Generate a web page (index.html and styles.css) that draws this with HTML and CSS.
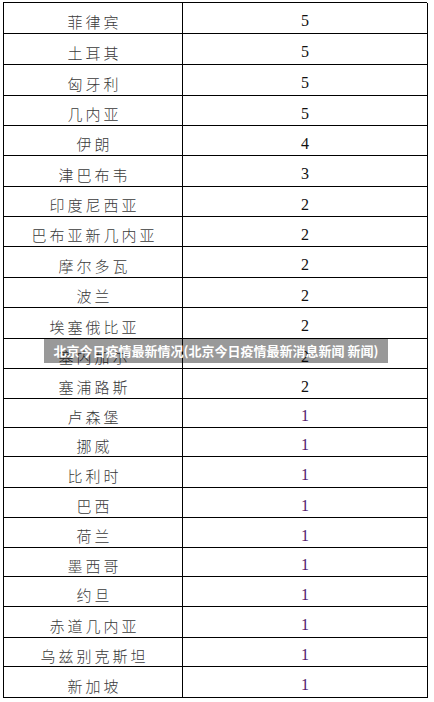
FILE: index.html
```html
<!DOCTYPE html>
<html lang="zh-CN">
<head>
<meta charset="utf-8">
<title>北京今日疫情最新情况</title>
<link rel="stylesheet" href="styles.css">
</head>
<body>
<div class="page">
  <div class="table">
    <div class="cell name">菲律宾</div><div class="cell num">5</div>
    <div class="cell name">土耳其</div><div class="cell num">5</div>
    <div class="cell name">匈牙利</div><div class="cell num">5</div>
    <div class="cell name">几内亚</div><div class="cell num">5</div>
    <div class="cell name">伊朗</div><div class="cell num">4</div>
    <div class="cell name">津巴布韦</div><div class="cell num">3</div>
    <div class="cell name">印度尼西亚</div><div class="cell num">2</div>
    <div class="cell name">巴布亚新几内亚</div><div class="cell num">2</div>
    <div class="cell name">摩尔多瓦</div><div class="cell num">2</div>
    <div class="cell name">波兰</div><div class="cell num">2</div>
    <div class="cell name">埃塞俄比亚</div><div class="cell num">2</div>
    <div class="cell name">塞内加尔</div><div class="cell num">2</div>
    <div class="cell name">塞浦路斯</div><div class="cell num">2</div>
    <div class="cell name">卢森堡</div><div class="cell num one">1</div>
    <div class="cell name">挪威</div><div class="cell num one">1</div>
    <div class="cell name">比利时</div><div class="cell num one">1</div>
    <div class="cell name">巴西</div><div class="cell num one">1</div>
    <div class="cell name">荷兰</div><div class="cell num one">1</div>
    <div class="cell name">墨西哥</div><div class="cell num one">1</div>
    <div class="cell name">约旦</div><div class="cell num one">1</div>
    <div class="cell name">赤道几内亚</div><div class="cell num one">1</div>
    <div class="cell name">乌兹别克斯坦</div><div class="cell num one">1</div>
    <div class="cell name">新加坡</div><div class="cell num one">1</div>
  </div>
  <div class="banner">北京今日疫情最新情况(北京今日疫情最新消息新闻 新闻)</div>
</div>
</body>
</html>
```

FILE: styles.css
```css
html, body {
  margin: 0;
  padding: 0;
  background: #fff;
}

.page {
  position: relative;
  width: 434px;
  height: 702px;
  padding: 2px 0 0 3px;
  box-sizing: border-box;
}

.table {
  display: grid;
  width: 424px;
  grid-template-columns: 179px 245px;
  grid-template-rows: 31px 31px 31px 30px 30px 31px 30px 30px 31px 30px 31px 30px 30px 29px 29px 31px 30px 30px 29px 30px 31px 29px 31px;
  border-top: 1px solid #000;
  border-left: 1px solid #000;
  box-sizing: border-box;
}

.cell {
  display: flex;
  align-items: center;
  justify-content: center;
  border-right: 1px solid #000;
  border-bottom: 1px solid #000;
  box-sizing: border-box;
  padding-top: 6px;
}

.name {
  font-family: "Noto Sans CJK SC", sans-serif;
  font-weight: 300;
  font-size: 15px;
  letter-spacing: 3px;
  padding-left: 3px;
  color: #3a3a3a;
}

.num {
  font-family: "Liberation Serif", serif;
  font-size: 16px;
  color: #111;
}

.num.one {
  color: #52206c;
}

.banner {
  position: absolute;
  left: 44px;
  top: 339px;
  width: 344px;
  height: 24px;
  box-sizing: border-box;
  background: rgba(0, 0, 0, 0.4);
  color: #fff;
  font-family: "Noto Sans CJK SC", sans-serif;
  font-weight: 700;
  font-size: 13px;
  line-height: 24px;
  text-align: center;
  white-space: nowrap;
}
```
